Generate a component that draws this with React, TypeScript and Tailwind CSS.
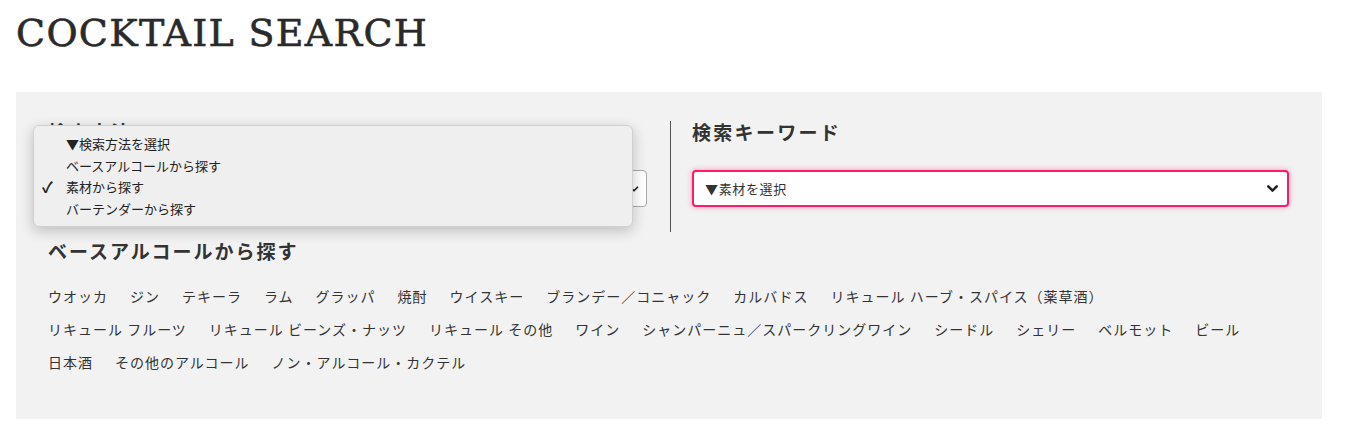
import { ChevronDown } from 'lucide-react';

const METHODS = ['▼検索方法を選択', 'ベースアルコールから探す', '素材から探す', 'バーテンダーから探す'];

const BASES = [
  'ウオッカ', 'ジン', 'テキーラ', 'ラム', 'グラッパ', '焼酎', 'ウイスキー', 'ブランデー／コニャック', 'カルバドス',
  'リキュール ハーブ・スパイス（薬草酒）', 'リキュール フルーツ', 'リキュール ビーンズ・ナッツ', 'リキュール その他', 'ワイン',
  'シャンパーニュ／スパークリングワイン', 'シードル', 'シェリー', 'ベルモット', 'ビール', '日本酒', 'その他のアルコール',
  'ノン・アルコール・カクテル',
];

const jp = { fontFamily: '"Noto Sans CJK JP", sans-serif' };

export default function App() {
  return (
    <div className="min-h-screen bg-white pl-4 text-[#333]" style={jp}>
      <h1 className="pt-[14px] text-[38px] leading-[38px] tracking-[1.3px] text-[#2a2a2a] [-webkit-text-stroke:0.6px_#2a2a2a]" style={{ fontFamily: '"DejaVu Serif", serif' }}>
        COCKTAIL SEARCH
      </h1>

      <div className="relative mt-10 w-[1306px] bg-[#f2f2f2] px-8 pt-[29px] pb-[40px]">
        <div className="flex">
          <div className="w-[599px] pb-[25px]">
            <div className="text-[19px] leading-[22px] font-bold tracking-[2px]">検索方法</div>
            <div className="mt-[27px] flex h-[37px] items-center justify-between rounded border border-[#a9a9a9] bg-white pl-3 pr-[5px] text-[13px]">
              <span>▼素材から探す</span>
              <ChevronDown size={14} strokeWidth={3} className="text-[#222]" />
            </div>
          </div>
          <div className="ml-[23px] mr-[21px] w-px bg-[#555]" />
          <div className="w-[597px] pb-[25px]">
            <div className="text-[19px] leading-[22px] font-bold tracking-[2.3px]">検索キーワード</div>
            <div className="mt-[27px] flex h-[37px] items-center justify-between rounded border-2 border-[#ff1a66] bg-white pl-[11px] pr-[6px] text-[13px] tracking-[0.05em] shadow-[0_0_6px_rgba(255,0,102,0.35)]">
              <span>▼素材を選択</span>
              <ChevronDown size={17} strokeWidth={3.5} className="text-[#222]" />
            </div>
          </div>
        </div>

        <h2 className="mt-[7px] text-[19px] leading-6 font-bold tracking-[2px]">ベースアルコールから探す</h2>
        <ul className="mt-[17px] flex w-[1215px] flex-wrap gap-x-[22px] text-[14px] leading-[33px] tracking-[1px]">
          {BASES.map((b) => (
            <li key={b} className="whitespace-pre">{b}</li>
          ))}
        </ul>

        {/* open native dropdown */}
        <div className="absolute left-[17px] top-[33px] w-[600px] rounded-md border border-[#d0d0d0] bg-[#efefef] py-[7px] text-[13px] leading-[21.5px] text-[#222] shadow-[0_4px_14px_rgba(0,0,0,0.22)]">
          {METHODS.map((m, i) => (
            <div key={m} className="relative pl-8">
              {i === 2 && <span className="absolute left-[8px] top-0 text-[15px] font-bold">✓</span>}
              {m}
            </div>
          ))}
        </div>
      </div>
    </div>
  );
}
